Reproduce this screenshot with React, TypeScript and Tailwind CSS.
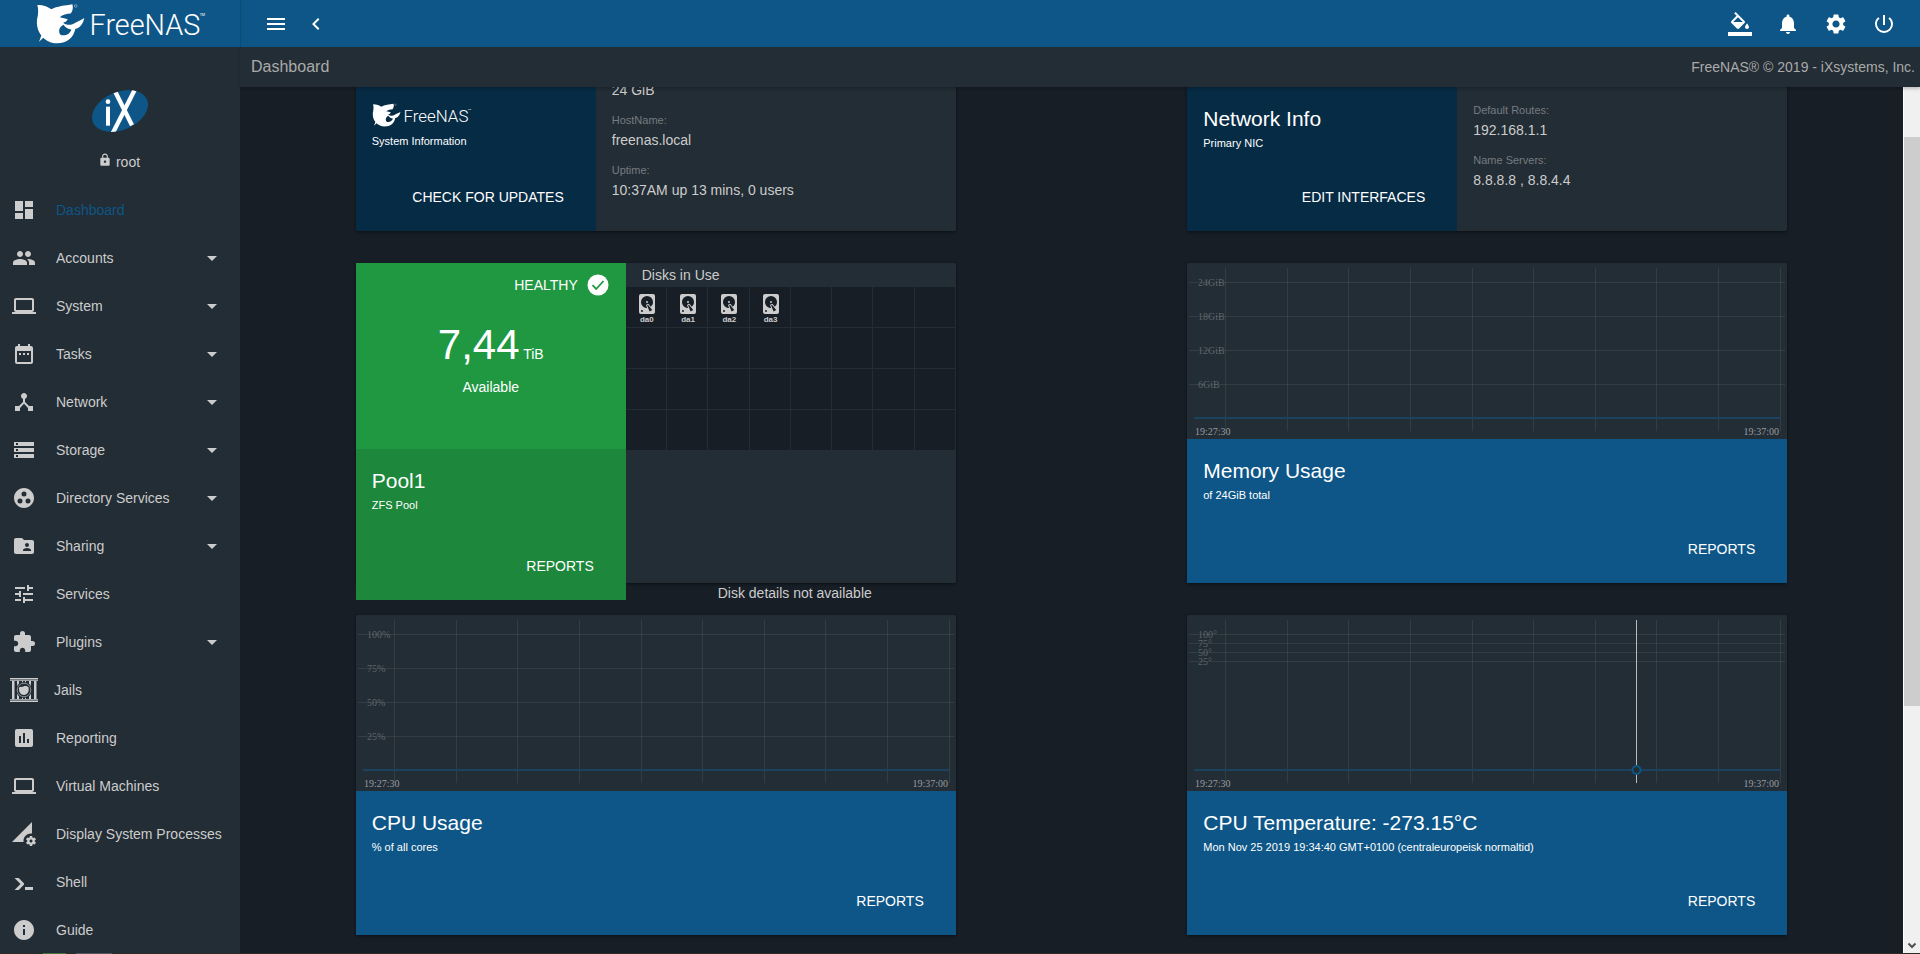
import type { ReactNode } from "react";
import type { IconType } from "react-icons";
import {
  MdArrowDropDown,
  MdAssessment,
  MdChevronLeft,
  MdDashboard,
  MdDateRange,
  MdDeviceHub,
  MdExtension,
  MdFolderShared,
  MdGroupWork,
  MdInfo,
  MdLaptop,
  MdLock,
  MdMenu,
  MdNotifications,
  MdPeople,
  MdPermDataSetting,
  MdPowerSettingsNew,
  MdSettings,
  MdStorage,
  MdTune,
} from "react-icons/md";

function FreeNasLogo({ className }: { className: string }) {
  return (
    <svg viewBox="18 6 510 124" className={className} role="img" aria-label="FreeNAS">
      <path
        fill="#fff"
        d="M20 12C40 12 54 18 62 25C80 16 104 14 126 10C129 20 127 30 121 38C110 38 96 42 88 49C96 52 106 52 112 55C108 62 104 64 98 66C108 74 122 74 132 67C142 61 152 58 162 51C158 70 148 81 135 84C130 110 110 128 80 128C62 128 48 121 38 111L25 123C28 116 30 110 32 104C22 92 17 74 19 56C23 40 24 26 20 12ZM99 72C88 77 82 90 89 101C100 108 118 102 123 86C113 86 104 80 99 72Z"
        fillRule="evenodd"
      />
      <circle cx="136" cy="15" r="4" fill="none" stroke="#fff" strokeOpacity=".6" strokeWidth="2" />
      <text x="178" y="104" fontSize="87" fontWeight="300" fontFamily="Roboto, sans-serif" fill="#fff">
        FreeNAS
      </text>
      <text x="511" y="44" fontSize="11" fontFamily="Roboto, sans-serif" fill="#fff">
        TM
      </text>
    </svg>
  );
}

function IxLogo() {
  return (
    <svg viewBox="186 270 168 126" className="h-[42px] w-14" role="img" aria-label="iX">
      <defs>
        <clipPath id="ix-disc">
          <ellipse cx="270" cy="333" rx="88" ry="57" transform="rotate(-23 270 333)" />
        </clipPath>
      </defs>
      <ellipse cx="270" cy="333" rx="88" ry="57" transform="rotate(-23 270 333)" fill="#0d5687" />
      <g clipPath="url(#ix-disc)" stroke="#fff" strokeWidth="13">
        <line x1="318" y1="262" x2="247" y2="402" />
        <line x1="255" y1="274" x2="306" y2="376" />
      </g>
      <rect x="228" y="320" width="12" height="57" fill="#fff" />
      <circle cx="234" cy="305" r="7" fill="#fff" />
    </svg>
  );
}

function ColorFillIcon() {
  return (
    <svg viewBox="0 0 24 24" fill="currentColor" className="size-6" aria-hidden="true">
      <path d="M16.56 8.94 7.62 0 6.21 1.41l2.38 2.38-5.15 5.15c-.59.59-.59 1.54 0 2.12l5.5 5.5c.29.29.68.44 1.06.44s.77-.15 1.06-.44l5.5-5.5c.59-.58.59-1.53 0-2.12zM5.21 10 10 5.21 14.79 10H5.21zM19 11.5s-2 2.17-2 3.5c0 1.1.9 2 2 2s2-.9 2-2c0-1.33-2-3.5-2-3.5z" />
      <path d="M0 20h24v4H0z" />
    </svg>
  );
}

function HealthyIcon() {
  return (
    <svg viewBox="0 0 24 24" className="size-6" aria-hidden="true">
      <circle cx="12" cy="12" r="10.500" fill="#fff" />
      <path d="m6.500 12.200 3.700 3.800 7.300-8" fill="none" stroke="#209842" strokeWidth="1.800" />
    </svg>
  );
}

function JailIcon() {
  return (
    <svg viewBox="0 0 28 24" className="h-6 w-7 shrink-0" aria-hidden="true">
      <path
        fill="#ccc"
        d="M0 0h28v1.200H0zM0 1.800h28v1H0zM0 21.200h28v1H0zM0 22.800h28V24H0zM2 3h2.500v18H2zM7 3h2v18H7zM12 3h1v18h-1zM15 3h1v18h-1zM19 3h2v18h-2zM24 3h2.500v18H24z"
      />
      <circle cx="14" cy="12" r="8" fill="#232d35" />
      <circle cx="14" cy="12" r="6.800" fill="none" stroke="#a3a8ab" strokeWidth=".8" />
      <path fill="#ccc" d="M9 9.500c1.500-1 3-.2 4.500-1 1.500-.7 3.500-.7 5 .8 1 4-1 7.700-4.500 7.700S8.500 13.500 9 9.500z" />
    </svg>
  );
}

function ShellIcon() {
  return (
    <svg viewBox="0 -1 24 24" fill="currentColor" className="size-6 shrink-0" aria-hidden="true">
      <path d="M13 19v-3h8v3h-8M8.500 13 2.470 7h4.240l4.960 4.960c.58.58.58 1.540 0 2.110L6.740 19H2.500l6-6Z" />
    </svg>
  );
}

function DiskIcon() {
  return (
    <svg viewBox="0 0 24 24" fill="currentColor" className="size-6" aria-hidden="true">
      <path d="M6,2H18A2,2 0 0,1 20,4V20A2,2 0 0,1 18,22H6A2,2 0 0,1 4,20V4A2,2 0 0,1 6,2M12,4A6,6 0 0,0 6,10C6,13.31 8.69,16 12.1,16L11.22,13.77C10.95,13.29 11.11,12.68 11.59,12.4L12.45,11.9C12.93,11.63 13.54,11.79 13.82,12.27L15.74,14.69C17.12,13.59 18,11.9 18,10A6,6 0 0,0 12,4M12,9A1,1 0 0,1 13,10A1,1 0 0,1 12,11A1,1 0 0,1 11,10A1,1 0 0,1 12,9M7,18A1,1 0 0,0 6,19A1,1 0 0,0 7,20A1,1 0 0,0 8,19A1,1 0 0,0 7,18M12.09,13.27L14.58,19.58L17.17,18.08L12.95,12.77L12.09,13.27Z" />
    </svg>
  );
}

type NavItem = { label: string; icon?: IconType; custom?: "jail" | "shell"; expands?: boolean };

const navItems: NavItem[] = [
  { label: "Dashboard", icon: MdDashboard },
  { label: "Accounts", icon: MdPeople, expands: true },
  { label: "System", icon: MdLaptop, expands: true },
  { label: "Tasks", icon: MdDateRange, expands: true },
  { label: "Network", icon: MdDeviceHub, expands: true },
  { label: "Storage", icon: MdStorage, expands: true },
  { label: "Directory Services", icon: MdGroupWork, expands: true },
  { label: "Sharing", icon: MdFolderShared, expands: true },
  { label: "Services", icon: MdTune },
  { label: "Plugins", icon: MdExtension, expands: true },
  { label: "Jails", custom: "jail" },
  { label: "Reporting", icon: MdAssessment },
  { label: "Virtual Machines", icon: MdLaptop },
  { label: "Display System Processes", icon: MdPermDataSetting },
  { label: "Shell", custom: "shell" },
  { label: "Guide", icon: MdInfo },
];

function NavRow({ item }: { item: NavItem }) {
  const Icon = item.icon;
  const isJail = item.custom === "jail";
  return (
    <li>
      <a href="#" className={isJail ? "flex h-12 items-center gap-4 pl-[10px]" : "flex h-12 items-center gap-5 pl-3"}>
        {Icon && <Icon size={24} className="shrink-0" />}
        {isJail && <JailIcon />}
        {item.custom === "shell" && <ShellIcon />}
        <span className={item.label === "Dashboard" ? "grow text-[#0d5687]" : "grow whitespace-nowrap"}>{item.label}</span>
        {item.expands && <MdArrowDropDown size={24} className="mr-4 shrink-0" />}
      </a>
    </li>
  );
}

function Sidebar() {
  return (
    <aside className="w-60 shrink-0 bg-[#232d35] text-sm text-[#ccc]">
      <div className="flex h-[139px] flex-col items-center pt-[43px]">
        <IxLogo />
        <div className="mt-5 flex items-center gap-1 pr-[2px]">
          <MdLock size={14} className="mb-1" />
          <span>root</span>
        </div>
      </div>
      <nav>
        <ul>
          {navItems.map((item) => (
            <NavRow key={item.label} item={item} />
          ))}
        </ul>
      </nav>
    </aside>
  );
}

function IconButton({ label, children }: { label: string; children: ReactNode }) {
  return (
    <button type="button" aria-label={label} className="flex size-12 items-center justify-center">
      {children}
    </button>
  );
}

function TopBar() {
  return (
    <header className="flex h-[47px] items-center bg-[#0d5687] text-white">
      <div className="flex h-full w-60 shrink-0 items-center pl-9 shadow-[1px_0_1px_rgba(0,0,0,0.1)]">
        <FreeNasLogo className="h-[41px] w-[170px]" />
      </div>
      <div className="flex grow items-center gap-4 pl-6">
        <button type="button" aria-label="Toggle menu">
          <MdMenu size={24} />
        </button>
        <button type="button" aria-label="Collapse menu">
          <MdChevronLeft size={24} />
        </button>
      </div>
      <div className="flex items-center pr-3">
        <IconButton label="Theme">
          <ColorFillIcon />
        </IconButton>
        <IconButton label="Notifications">
          <MdNotifications size={24} />
        </IconButton>
        <IconButton label="Settings">
          <MdSettings size={24} />
        </IconButton>
        <IconButton label="Power">
          <MdPowerSettingsNew size={24} />
        </IconButton>
      </div>
    </header>
  );
}

function Card({ className = "", children }: { className?: string; children: ReactNode }) {
  return (
    <section
      className={`w-[600px] rounded-[2px] bg-[#232d35] shadow-[0_1px_3px_rgba(0,0,0,0.5)] ${className}`}
    >
      {children}
    </section>
  );
}

function PanelFooter({
  title,
  subtitle,
  action,
  className,
}: {
  title: ReactNode;
  subtitle: string;
  action: string;
  className: string;
}) {
  return (
    <div className={`flex flex-col p-4 text-white ${className}`}>
      {title}
      <p className="text-[11px] leading-4">{subtitle}</p>
      <div className="grow" />
      <button type="button" className="h-9 self-end px-4 text-sm">
        {action}
      </button>
    </div>
  );
}

function Title({ children }: { children: ReactNode }) {
  return <h2 className="text-[21px] leading-8">{children}</h2>;
}

function Detail({ label, value }: { label?: string; value: string }) {
  return (
    <div>
      {label && <dt className="text-[11px] leading-4 text-[#767c81]">{label}</dt>}
      <dd className="text-sm leading-6 text-[#ccc]">{value}</dd>
    </div>
  );
}

const columnXs = [38.5, 100.5, 161.5, 223.5, 285.5, 346.5, 408.5, 469.5, 531.5, 593.5];

function Chart({ name, ticks, cursorX }: { name: string; ticks: { label: string; y: number }[]; cursorX?: number }) {
  return (
    <svg viewBox="0 0 600 176" className="block w-full" fontFamily="'Liberation Serif', serif" fontSize="10" role="img" aria-label={name}>
      <g stroke="#fff" strokeOpacity=".08">
        {columnXs.map((x) => (
          <line key={x} x1={x} x2={x} y1="5" y2="168" />
        ))}
        {ticks.map((t) => (
          <line key={t.y} x1="2" x2="598" y1={t.y} y2={t.y} />
        ))}
      </g>
      {ticks.map((t) => (
        <text key={t.label} x="11" y={t.y + 3.5} fill="#fff" fillOpacity=".27">
          {t.label}
        </text>
      ))}
      <line x1="7" x2="593" y1="155" y2="155" stroke="#1a4362" strokeWidth="2" />
      <text x="8" y="172" fill="#999ca0">
        19:27:30
      </text>
      <text x="592" y="172" textAnchor="end" fill="#999ca0">
        19:37:00
      </text>
      {cursorX !== undefined && (
        <>
          <line x1={cursorX} x2={cursorX} y1="5" y2="168" stroke="#bbb" />
          <circle cx={cursorX} cy="155" r="4" fill="#232d35" stroke="#0d5687" strokeWidth="2" />
        </>
      )}
    </svg>
  );
}

const evenYs = [19.5, 53.5, 87.5, 121.5];
const cpuTicks = ["100%", "75%", "50%", "25%"].map((label, i) => ({ label, y: evenYs[i] }));
const memoryTicks = ["24GiB", "18GiB", "12GiB", "6GiB"].map((label, i) => ({ label, y: evenYs[i] }));
const tempTicks = ["100°", "75°", "50°", "25°"].map((label, i) => ({ label, y: 19.5 + i * 9 }));

function ChartCard({
  title,
  subtitle,
  ticks,
  cursorX,
}: {
  title: string;
  subtitle: string;
  ticks: { label: string; y: number }[];
  cursorX?: number;
}) {
  return (
    <Card>
      <Chart name={title} ticks={ticks} cursorX={cursorX} />
      <PanelFooter title={<Title>{title}</Title>} subtitle={subtitle} action="REPORTS" className="h-36 bg-[#0d5687]" />
    </Card>
  );
}

const slots = Array.from({ length: 32 }, (_, i) => (i < 4 ? `da${i}` : null));

function PoolCard() {
  return (
    <Card className="flex h-80 items-start">
      <div className="w-[270px] shrink-0 text-white">
        <div className="flex h-[186px] flex-col bg-[#209842] px-4 pt-[10px]">
          <div className="flex items-center justify-end gap-2 text-sm">
            HEALTHY
            <HealthyIcon />
          </div>
          <p className="mt-[18px] text-center text-sm">
            <span className="text-[42px] leading-[60px]">7,44</span> TiB
          </p>
          <p className="text-center text-sm leading-6">Available</p>
        </div>
        <PanelFooter title={<Title>Pool1</Title>} subtitle="ZFS Pool" action="REPORTS" className="h-[151px] bg-[#1d873b]" />
      </div>
      <div className="flex h-full grow flex-col">
        <h3 className="px-4 text-sm leading-6 text-[#ccc]">Disks in Use</h3>
        <ul className="grid grid-cols-8 bg-[#171e26]">
          {slots.map((disk, i) => (
            <li
              key={i}
              className="flex h-[41px] flex-col items-center border-r border-b border-[#232d35] pt-[5px] pl-[2px] text-[#ccc]"
            >
              {disk && (
                <>
                  <DiskIcon />
                  <span className="text-[8px] leading-[8px] font-bold">{disk}</span>
                </>
              )}
            </li>
          ))}
        </ul>
        <div className="grow" />
        <p className="-mb-5 pl-2 text-center text-sm leading-5 text-[#ccc]">Disk details not available</p>
      </div>
    </Card>
  );
}

function SystemCard() {
  return (
    <Card className="flex h-36 overflow-hidden">
      <PanelFooter
        title={<FreeNasLogo className="mb-[6px] h-6 w-[100px]" />}
        subtitle="System Information"
        action="CHECK FOR UPDATES"
        className="w-60 shrink-0 bg-[#062b45]"
      />
      <dl className="flex flex-col justify-end gap-[10px] px-4 pb-[29px]">
        <Detail value="24 GiB" />
        <Detail label="HostName:" value="freenas.local" />
        <Detail label="Uptime:" value="10:37AM up 13 mins, 0 users" />
      </dl>
    </Card>
  );
}

function NetworkCard() {
  return (
    <Card className="flex h-36 overflow-hidden">
      <PanelFooter
        title={<Title>Network Info</Title>}
        subtitle="Primary NIC"
        action="EDIT INTERFACES"
        className="w-[270px] shrink-0 bg-[#062b45]"
      />
      <dl className="flex flex-col justify-end gap-[10px] px-4 pb-[39px]">
        <Detail label="Default Routes:" value="192.168.1.1" />
        <Detail label="Name Servers:" value="8.8.8.8 , 8.8.4.4" />
      </dl>
    </Card>
  );
}

function ScrollRail() {
  return (
    <div className="flex w-[17px] shrink-0 flex-col border-l border-white bg-[#f0f0f0]" aria-hidden="true">
      <div className="h-[50px]" />
      <div className="h-[569px] bg-[#cdcdcd]" />
      <div className="grow" />
      <svg viewBox="0 0 16 17" className="h-[17px] w-4">
        <path d="M4.500 6.500 8 10l3.500-3.500" fill="none" stroke="#505050" strokeWidth="2" />
      </svg>
    </div>
  );
}

export default function App() {
  return (
    <div className="relative flex min-h-screen flex-col bg-[#171e26] font-['Liberation_Sans',Arial,sans-serif]">
      <TopBar />
      <div className="flex grow">
        <Sidebar />
        <div className="flex min-w-0 grow flex-col">
          <div className="z-10 flex h-10 items-center justify-between bg-[#232d35] pr-[5px] pl-[11px] text-[#aaa] shadow-[0_2px_3px_rgba(0,0,0,0.2)]">
            <h1 className="text-base">Dashboard</h1>
            <span className="text-sm">FreeNAS® © 2019 - iXsystems, Inc.</span>
          </div>
          <div className="flex grow">
            <main className="grid grow grid-cols-2 content-start justify-items-center gap-y-8">
              <SystemCard />
              <NetworkCard />
              <PoolCard />
              <ChartCard title="Memory Usage" subtitle="of 24GiB total" ticks={memoryTicks} />
              <ChartCard title="CPU Usage" subtitle="% of all cores" ticks={cpuTicks} />
              <ChartCard
                title="CPU Temperature: -273.15°C"
                subtitle="Mon Nov 25 2019 19:34:40 GMT+0100 (centraleuropeisk normaltid)"
                ticks={tempTicks}
                cursorX={449.5}
              />
            </main>
            <ScrollRail />
          </div>
        </div>
      </div>
      <div className="absolute inset-x-0 bottom-0 z-20 flex h-px gap-[10px] bg-[#2c2b26] pl-[43px]" aria-hidden="true">
        <div className="w-[23px] bg-[#43763a]" />
        <div className="w-9 bg-[#55565a]" />
      </div>
    </div>
  );
}
